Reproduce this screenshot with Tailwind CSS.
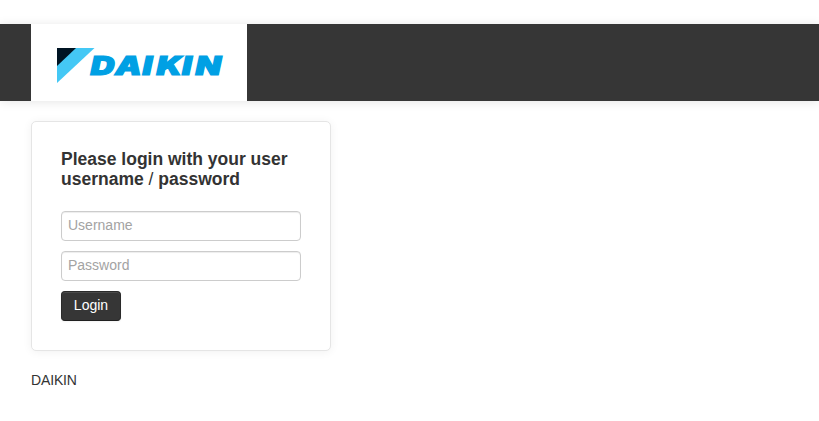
<!DOCTYPE html>
<html lang="en">
<head>
<meta charset="utf-8">
<title>DAIKIN</title>
<script src="https://cdn.jsdelivr.net/npm/@tailwindcss/browser@4"></script>
</head>
<body class="bg-white pt-6 text-[14px] leading-5 text-[#333] overflow-hidden font-['Nimbus_Sans','Liberation_Sans',sans-serif]">
<header class="h-[77px] bg-[#363636] pl-[31px] shadow-[0_1px_10px_rgba(0,0,0,0.1)]">
  <a class="block h-full w-[216px] bg-white">
    <svg class="block" width="216" height="77" viewBox="31 24 216 77" role="img" aria-label="DAIKIN">
      <path d="M57 48H94.5L57 83Z" fill="#44c8f5"/>
      <path d="M57 48H76L57 66Z" fill="#001423"/>
      <g transform="translate(0.4 75.2) scale(1.3 1)" fill="#00a0e4" stroke="#00a0e4" stroke-width="1.2" font-family="Inter, 'Liberation Sans', sans-serif" font-size="25.5" font-weight="900" font-style="italic">
        <text x="69.3 88.3 109.4 120.1 139.7 150" y="0">DAIKIN</text>
      </g>
    </svg>
  </a>
</header>
<main class="pl-[31px] pt-5">
  <form class="h-[230px] w-[300px] rounded-[5px] border border-[#e5e5e5] bg-white px-[29px] pt-[27px] shadow-[0_1px_10px_rgba(0,0,0,0.06)]">
    <h2 class="mb-[22px] whitespace-nowrap text-[17.5px] font-bold leading-5">Please login with your user<br>username <span class="font-normal">/</span> password</h2>
    <input class="mb-[10px] block h-[30px] w-60 rounded-[4px] border border-[#ccc] bg-white px-[6px] pb-[2px] shadow-[inset_0_1px_1px_rgba(0,0,0,0.075)] placeholder:text-[#a3a3a3]" type="text" placeholder="Username">
    <input class="mb-[10px] block h-[30px] w-60 rounded-[4px] border border-[#ccc] bg-white px-[6px] pb-[2px] shadow-[inset_0_1px_1px_rgba(0,0,0,0.075)] placeholder:text-[#a3a3a3]" type="password" placeholder="Password">
    <button class="block h-[30px] w-[60px] rounded-[4px] border border-[#2a2a2a] border-b-[#202020] bg-[#363636] pb-[2px] text-white shadow-[inset_0_1px_0_rgba(255,255,255,0.1),0_1px_2px_rgba(0,0,0,0.05)]" type="button">Login</button>
  </form>
  <p class="mt-[19px] tracking-[-0.15px]">DAIKIN</p>
</main>
</body>
</html>
